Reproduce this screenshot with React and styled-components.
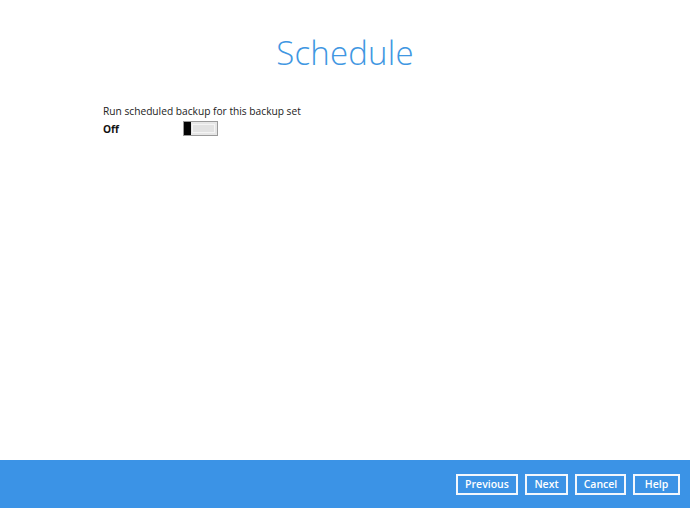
import React from "react";
import styled, { createGlobalStyle } from "styled-components";

const Global = createGlobalStyle`
  html, body { margin: 0; padding: 0; background: #ffffff; }
  body { font-family: "Open Sans", "Noto Sans", sans-serif; }
  #root { height: 508px; }
`;

const Page = styled.div`
  width: 690px;
  height: 508px;
  display: flex;
  flex-direction: column;
  background: #ffffff;
  overflow: hidden;
`;

const Main = styled.main`
  flex: 1;
  display: flex;
  flex-direction: column;
`;

const Title = styled.h1`
  margin: 32px 0 0;
  text-align: center;
  font-family: "Open Sans", sans-serif;
  font-weight: 300;
  font-size: 33px;
  line-height: 42px;
  color: #3f97e2;
  letter-spacing: 0.2px;
`;

const Section = styled.section`
  margin: 30px 0 0 103px;
  display: flex;
  flex-direction: column;
  gap: 3px;
`;

const Label = styled.div`
  font-size: 10.2px;
  line-height: 14px;
  color: #222;
`;

const Row = styled.div`
  display: flex;
  align-items: center;
`;

const State = styled.span`
  width: 80px;
  font-size: 10.2px;
  font-weight: 700;
  color: #111;
`;

const Toggle = styled.div`
  width: 35px;
  height: 15px;
  box-sizing: border-box;
  border: 1px solid #9a9a9a;
  background: #e6e6e6;
  display: flex;
  padding: 0;
`;

const Knob = styled.div`
  width: 7px;
  height: 100%;
  background: #050505;
`;

const Track = styled.div`
  flex: 1;
  margin: 2px 2px 2px 1px;
  background: #e2e2e2;
  border: 1px solid #f4f4f4;
`;

const Footer = styled.footer`
  height: 48px;
  background: #3b93e6;
  display: flex;
  justify-content: flex-end;
  align-items: center;
  gap: 7px;
  padding: 0 10px 0 0;
`;

const Button = styled.button`
  height: 21px;
  width: ${(p) => p.w}px;
  box-sizing: border-box;
  padding: 0;
  background: transparent;
  border: 2px solid #f2f7fd;
  color: #ffffff;
  font-family: "Open Sans", sans-serif;
  font-weight: 600;
  font-size: 10.5px;
  line-height: 1;
  display: flex;
  align-items: center;
  justify-content: center;
`;

export default function App() {
  return (
    <>
      <Global />
      <Page>
        <Main>
          <Title>Schedule</Title>
          <Section>
            <Label>Run scheduled backup for this backup set</Label>
            <Row>
              <State>Off</State>
              <Toggle>
                <Knob />
                <Track />
              </Toggle>
            </Row>
          </Section>
        </Main>
        <Footer>
          <Button w={62}>Previous</Button>
          <Button w={43}>Next</Button>
          <Button w={51}>Cancel</Button>
          <Button w={47}>Help</Button>
        </Footer>
      </Page>
    </>
  );
}
